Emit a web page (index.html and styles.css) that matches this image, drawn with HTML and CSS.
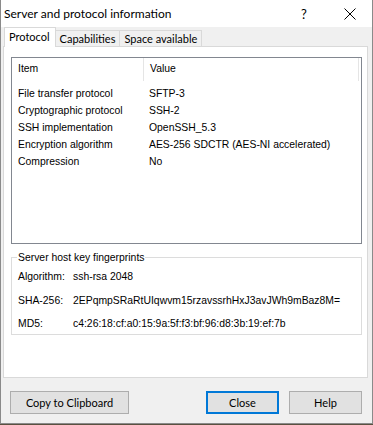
FILE: index.html
```html
<!DOCTYPE html>
<html lang="en">
<head>
  <meta charset="UTF-8">
  <title>Server and protocol information</title>
  <link rel="stylesheet" href="styles.css">
</head>
<body>

<div class="window">
  <div class="titlebar">
    <span class="title">Server and protocol information</span>
    <span class="tbtn help">?</span>
    <span class="tbtn close">
      <svg width="12" height="12" viewBox="0 0 12 12"><path d="M0.5 0.5 L11.5 11.5 M11.5 0.5 L0.5 11.5" stroke="#000" stroke-width="1" fill="none"/></svg>
    </span>
  </div>

  <div class="body">
    <div class="tabs">
      <div class="tab active">Protocol</div>
      <div class="tab">Capabilities</div>
      <div class="tab">Space available</div>
    </div>

    <div class="panel">
      <div class="listbox">
        <div class="row head">
          <div class="col1">Item</div>
          <div class="col2">Value</div>
        </div>
        <div class="row"><div class="col1">File transfer protocol</div><div class="col2">SFTP-3</div></div>
        <div class="row"><div class="col1">Cryptographic protocol</div><div class="col2">SSH-2</div></div>
        <div class="row"><div class="col1">SSH implementation</div><div class="col2">OpenSSH_5.3</div></div>
        <div class="row"><div class="col1">Encryption algorithm</div><div class="col2">AES-256 SDCTR (AES-NI accelerated)</div></div>
        <div class="row"><div class="col1">Compression</div><div class="col2">No</div></div>
      </div>

      <fieldset class="group">
        <legend>Server host key fingerprints</legend>
        <div class="fp"><span class="lbl">Algorithm:</span><span>ssh-rsa 2048</span></div>
        <div class="fp"><span class="lbl">SHA-256:</span><span>2EPqmpSRaRtUIqwvm15rzavssrhHxJ3avJWh9mBaz8M=</span></div>
        <div class="fp"><span class="lbl">MD5:</span><span>c4:26:18:cf:a0:15:9a:5f:f3:bf:96:d8:3b:19:ef:7b</span></div>
      </fieldset>
    </div>

    <div class="buttons">
      <button class="btn copy">Copy to Clipboard</button>
      <span class="spacer"></span>
      <button class="btn default">Close</button>
      <button class="btn">Help</button>
    </div>
  </div>
</div>

</body>
</html>
```

FILE: styles.css
```css
* {
  box-sizing: border-box;
}
body {
  margin: 0;
  background: #5a5140;
}
.window {
  width: 373px;
  height: 424px;
  border: 1px solid #8a8a8a;
  border-top: none;
  display: flex;
  flex-direction: column;
  background: #f0f0f0;
  font-family: Lato, "Open Sans", sans-serif;
  color: #000;
}
.titlebar {
  height: 27px;
  background: #fff;
  display: flex;
  align-items: center;
  padding-left: 3px;
}
.title {
  flex: 1;
  font-size: 12px;
  margin-top: -1px;
}
.tbtn {
  width: 46px;
  text-align: center;
  font-size: 13px;
}
.tbtn.close {
  display: flex;
  justify-content: center;
  margin-right: -1px;
}
.body {
  flex: 1;
  display: flex;
  flex-direction: column;
}
.tabs {
  display: flex;
  align-items: flex-end;
  height: 19px;
  padding-left: 3px;
}
.tab {
  height: 16px;
  line-height: 15px;
  padding: 0 4px;
  font-size: 11px;
  background: #f0f0f0;
  border: 1px solid #d9d9d9;
  border-bottom: none;
  margin-left: -1px;
}
.tab.active {
  height: 20px;
  line-height: 18px;
  background: #fff;
  padding: 0 5px 0 4px;
  margin-left: 0;
  margin-bottom: -1px;
  position: relative;
  z-index: 1;
}
.panel {
  height: 332px;
  margin: 0 4px 0 2px;
  background: #fff;
  border: 1px solid #d9d9d9;
  padding: 10px 5px 0 7px;
  font-family: "Liberation Sans", Arial, sans-serif;
  font-size: 10.4px;
}
.listbox {
  height: 187px;
  border: 1px solid #828790;
}
.row {
  display: flex;
  height: 17px;
  line-height: 17px;
}
.row.head {
  height: 23px;
  line-height: 21px;
  margin-bottom: 4px;
}
.col1 {
  width: 131px;
  padding-left: 6px;
}
.col2 {
  padding-left: 6px;
}
.row.head .col2 {
  flex: 1;
  border-left: 1px solid #e5e5e5;
  margin-right: 2px;
  border-right: 1px solid #e5e5e5;
}
.group {
  margin: 8px 0 0 0;
  padding: 4px 6px 0 6px;
  border: 1px solid #dcdcdc;
  height: 83px;
}
.group legend {
  padding: 0 1px;
  margin-left: -1px;
}
.fp {
  display: flex;
  height: 23.5px;
  line-height: 19px;
}
.lbl {
  width: 55px;
}
.buttons {
  flex: 1;
  display: flex;
  align-items: center;
  padding: 3px 10px 0 9px;
}
.spacer {
  flex: 1;
}
.btn {
  height: 23px;
  width: 73px;
  margin-left: 10px;
  background: #e1e1e1;
  border: 1px solid #adadad;
  font-family: Lato, "Open Sans", sans-serif;
  font-size: 11px;
  padding: 0;
  color: #000;
}
.btn.copy {
  width: 119px;
  margin-left: 0;
}
.btn.default {
  border: 2px solid #0078d7;
}
```
